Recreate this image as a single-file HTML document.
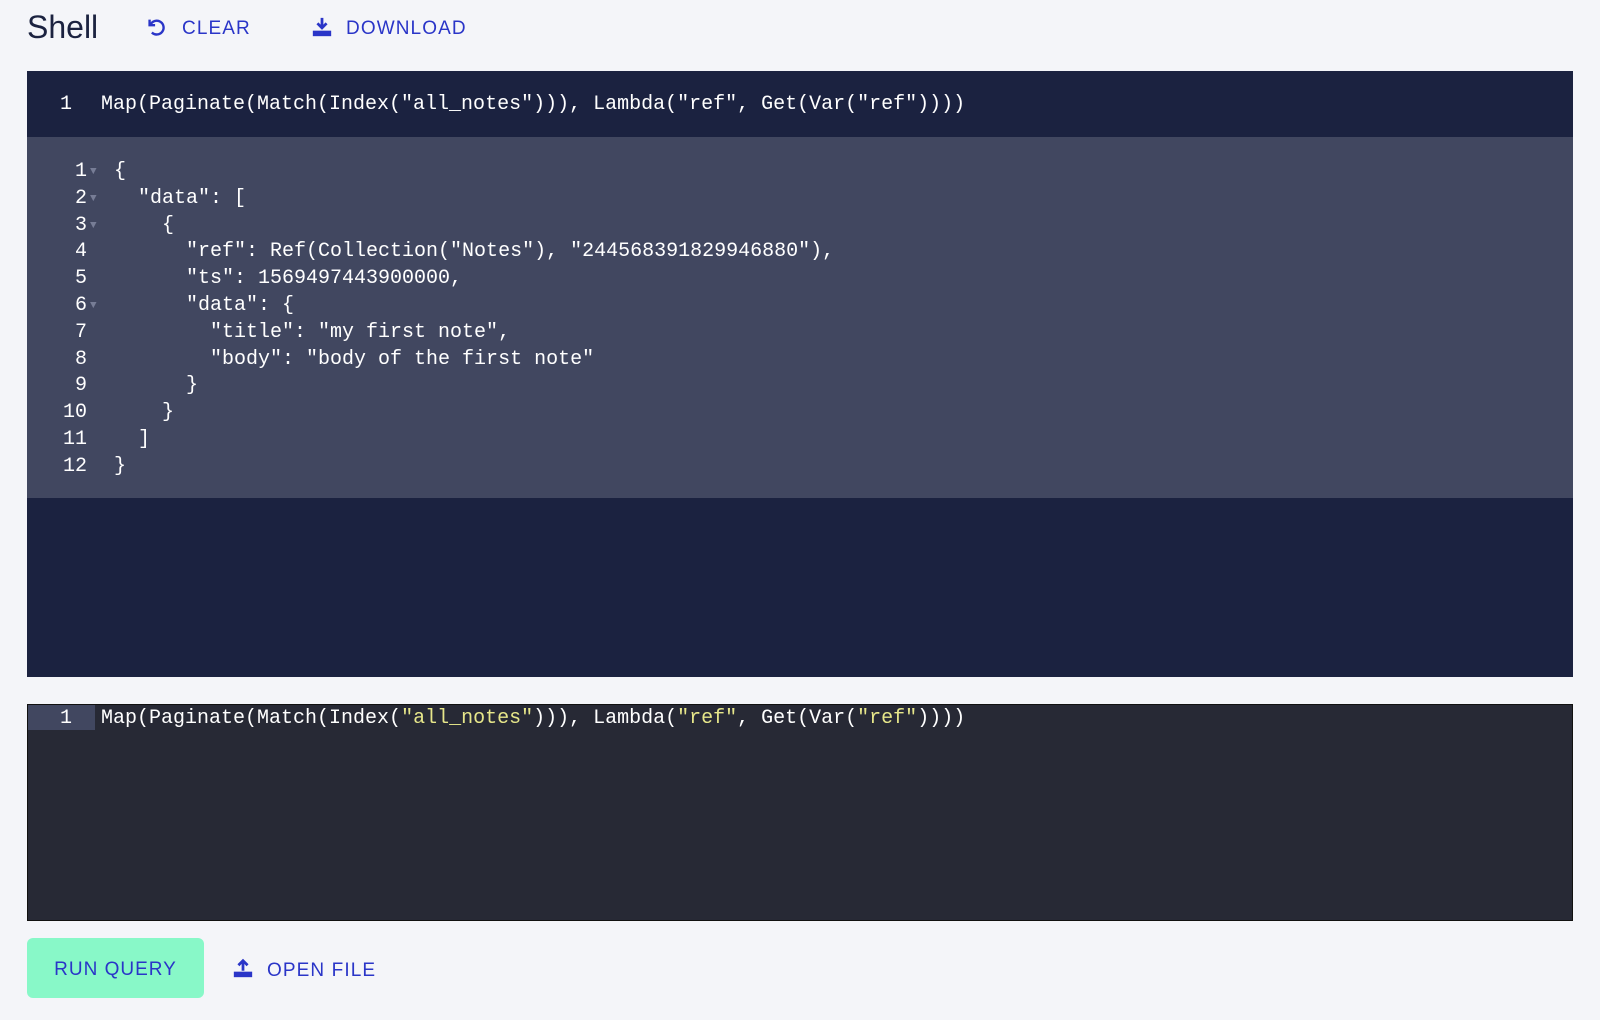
<!DOCTYPE html>
<html><head><meta charset="utf-8"><style>
*{margin:0;padding:0;box-sizing:border-box}
body{width:1600px;height:1020px;background:#f4f5f9;font-family:"Liberation Sans",sans-serif;position:relative;overflow:hidden}
.abs{position:absolute}
.title{left:27px;top:9px;font-size:32px;color:#1b2240}
.btn{color:#2a35c8;font-size:19px;letter-spacing:1.1px;top:18px}
.mono{font-family:"Liberation Mono",monospace;font-size:20px;color:#fff;white-space:pre}
.top{left:27px;top:71px;width:1546px;height:606px;background:#1b2240}
.res{left:27px;top:137px;width:1546px;height:361px;background:#414760}
.bot{left:27px;top:704px;width:1546px;height:217px;background:#272935;border:1px solid #111}
.run{left:27px;top:938px;width:177px;height:60px;background:#88f8c8;border-radius:6px;color:#2a35c8;font-size:19px;letter-spacing:1px;text-align:center;line-height:64px}
.y{color:#e6e68a}
.ln{position:absolute;width:60px;text-align:right}
.fold{position:absolute;left:96px;color:#777d96;font-size:11px}
</style></head><body>
<div class="abs title">Shell</div>
<svg class="abs" style="left:145px;top:16px" width="22" height="22" viewBox="0 0 24 24"><path d="M5 4v6h6" fill="none" stroke="#2a35c8" stroke-width="2.6"/><path d="M6 9.5A7.5 7.5 0 1 1 7.5 18" fill="none" stroke="#2a35c8" stroke-width="2.6"/></svg>
<div class="abs btn" style="left:182px">CLEAR</div>
<svg class="abs" style="left:311px;top:16px" width="22" height="22" viewBox="0 0 24 24"><path d="M12 2v11M7 8l5 5 5-5" fill="none" stroke="#2a35c8" stroke-width="3"/><rect x="2" y="16" width="20" height="6" fill="#2a35c8"/></svg>
<div class="abs btn" style="left:346px">DOWNLOAD</div>

<div class="abs top"></div>
<div class="abs mono" style="left:60px;top:93px">1</div>
<div class="abs mono" style="left:101px;top:93px">Map(Paginate(Match(Index("all_notes"))), Lambda("ref", Get(Var("ref"))))</div>
<div class="abs res"></div>
<div class="abs mono" style="left:27px;top:159px;line-height:26.8px">
<span class="ln" style="top:0">1</span><span class="ln" style="top:26.8px">2</span><span class="ln" style="top:53.6px">3</span><span class="ln" style="top:80.4px">4</span><span class="ln" style="top:107.2px">5</span><span class="ln" style="top:134px">6</span><span class="ln" style="top:160.8px">7</span><span class="ln" style="top:187.6px">8</span><span class="ln" style="top:214.4px">9</span><span class="ln" style="top:241.2px">10</span><span class="ln" style="top:268px">11</span><span class="ln" style="top:294.8px">12</span>
<span class="fold" style="left:63px;top:0">▼</span><span class="fold" style="left:63px;top:26.8px">▼</span><span class="fold" style="left:63px;top:53.6px">▼</span><span class="fold" style="left:63px;top:134px">▼</span>
</div>
<div class="abs mono" style="left:114px;top:159px;line-height:26.8px">{
  "data": [
    {
      "ref": Ref(Collection("Notes"), "244568391829946880"),
      "ts": 1569497443900000,
      "data": {
        "title": "my first note",
        "body": "body of the first note"
      }
    }
  ]
}</div>

<div class="abs bot"></div>
<div class="abs" style="left:28px;top:705px;width:67px;height:25px;background:#414760"></div>
<div class="abs mono" style="left:60px;top:707px">1</div>
<div class="abs mono" style="left:101px;top:707px">Map(Paginate(Match(Index(<span class="y">"all_notes"</span>))), Lambda(<span class="y">"ref"</span>, Get(Var(<span class="y">"ref"</span>))))</div>

<div class="abs run">RUN QUERY</div>
<svg class="abs" style="left:232px;top:957px" width="22" height="22" viewBox="0 0 24 24"><path d="M12 15V4M7 9l5-5 5 5" fill="none" stroke="#2a35c8" stroke-width="3"/><rect x="2" y="16" width="20" height="6" fill="#2a35c8"/></svg>
<div class="abs btn" style="left:267px;top:960px">OPEN FILE</div>
</body></html>
